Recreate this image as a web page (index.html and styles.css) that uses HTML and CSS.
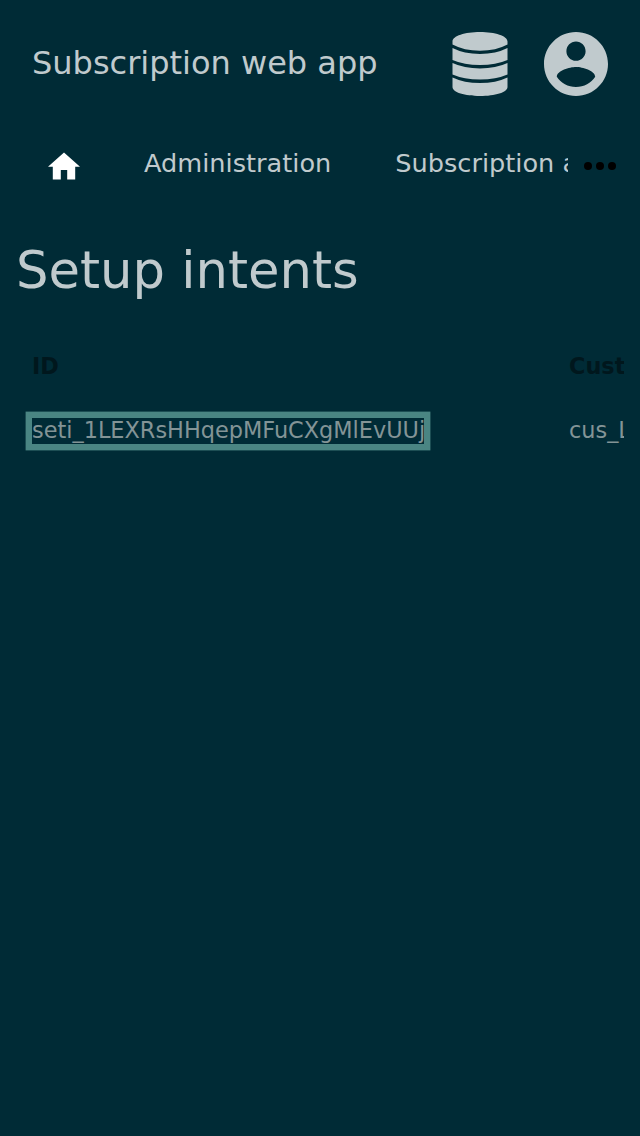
FILE: index.html
```html
<!DOCTYPE html>
<html lang="en">
<head>
<meta charset="utf-8">
<title>Subscription web app</title>
<link rel="stylesheet" href="styles.css">
</head>
<body>
<header class="header">
  <div class="brand">Subscription web app</div>
  <svg class="icon" viewBox="0 0 64 64"><path d="M4.500 9.500C4.500 4 17 0 32 0s27.500 4 27.500 9.500V12.500Q48 18.700 32 18.700T4.500 12.500zM4.500 16Q16 21.900 32 21.900t27.500-5.900v12Q48 33 32 33T4.500 28zM4.500 31Q16 36.400 32 36.400t27.500-5.400v11.500Q48 47.500 32 47.500T4.500 42.500zM4.500 45.500Q16 51 32 51T59.500 45.500v9.500c0 5.500-12.500 9-27.500 9S4.500 60.500 4.500 55z"/></svg>
  <svg class="icon" viewBox="2 2 20 20"><path d="M12 2C6.480 2 2 6.480 2 12s4.480 10 10 10 10-4.480 10-10S17.520 2 12 2zm0 3c1.660 0 3 1.340 3 3s-1.340 3-3 3-3-1.340-3-3 1.340-3 3-3zm0 14.200c-2.500 0-4.710-1.280-6-3.220.03-1.990 4-3.080 6-3.080 1.990 0 5.970 1.090 6 3.080-1.290 1.940-3.500 3.220-6 3.220z"/></svg>
</header>
<nav class="nav">
  <svg class="home" viewBox="2 3 20 17"><path d="M10 20v-6h4v6h5v-8h3L12 3 2 12h3v8z"/></svg>
  <div class="links"><span>Administration</span><span>Subscription administration</span></div>
  <svg class="more" viewBox="0 0 32 8"><circle cx="4" cy="4" r="4"/><circle cx="16" cy="4" r="4"/><circle cx="28" cy="4" r="4"/></svg>
</nav>
<main class="content">
  <h1 class="title">Setup intents</h1>
  <div class="scroller">
    <table class="table">
      <tr><th class="id">ID</th><th>Customer</th></tr>
      <tr><td class="id"><a class="link">seti_1LEXRsHHqepMFuCXgMlEvUUj</a></td><td>cus_LwPaVnKd</td></tr>
    </table>
  </div>
</main>
</body>
</html>
```
FILE: styles.css
```css
body { margin: 0; min-height: 1136px; background: #002b36; color: #c0cacd; font-family: "DejaVu Sans", sans-serif; overflow: hidden; }
.header { display: flex; height: 128px; box-sizing: border-box; padding: 0 32px; align-items: center; gap: 32px; }
.brand { flex: 1; font-size: 32px; line-height: 40px; padding-bottom: 2px; white-space: nowrap; }
.icon { width: 64px; height: 64px; fill: #c0cacd; }
.nav { display: flex; height: 72px; align-items: center; padding: 0 24px 0 48px; }
.home { width: 32px; height: 28px; fill: #fff; margin-top: 4px; }
.links { display: flex; width: 424px; margin: -3px 16px 0 64px; gap: 64px; overflow: hidden; white-space: nowrap; font-size: 25.6px; line-height: 34px; }
.more { width: 32px; height: 8px; margin-top: 4px; fill: #000; }
.content { padding: 0 16px; }
.title { margin: 40px 0 0; font-size: 51.2px; line-height: 60px; font-weight: 400; }
.scroller { overflow: hidden; margin-top: 34px; }
.table { width: 900px; table-layout: fixed; border-collapse: collapse; font-size: 22.4px; }
.table th, .table td { height: 64px; box-sizing: border-box; padding: 0 16px; text-align: left; white-space: nowrap; }
.table th { color: #00171d; }
.table td { color: #839496; }
.table .id { width: 537px; }
.link { display: inline-block; height: 26px; line-height: 25px; width: 392px; margin-top: 2px; box-shadow: 0 0 0 6.4px #4a8583; }
```
